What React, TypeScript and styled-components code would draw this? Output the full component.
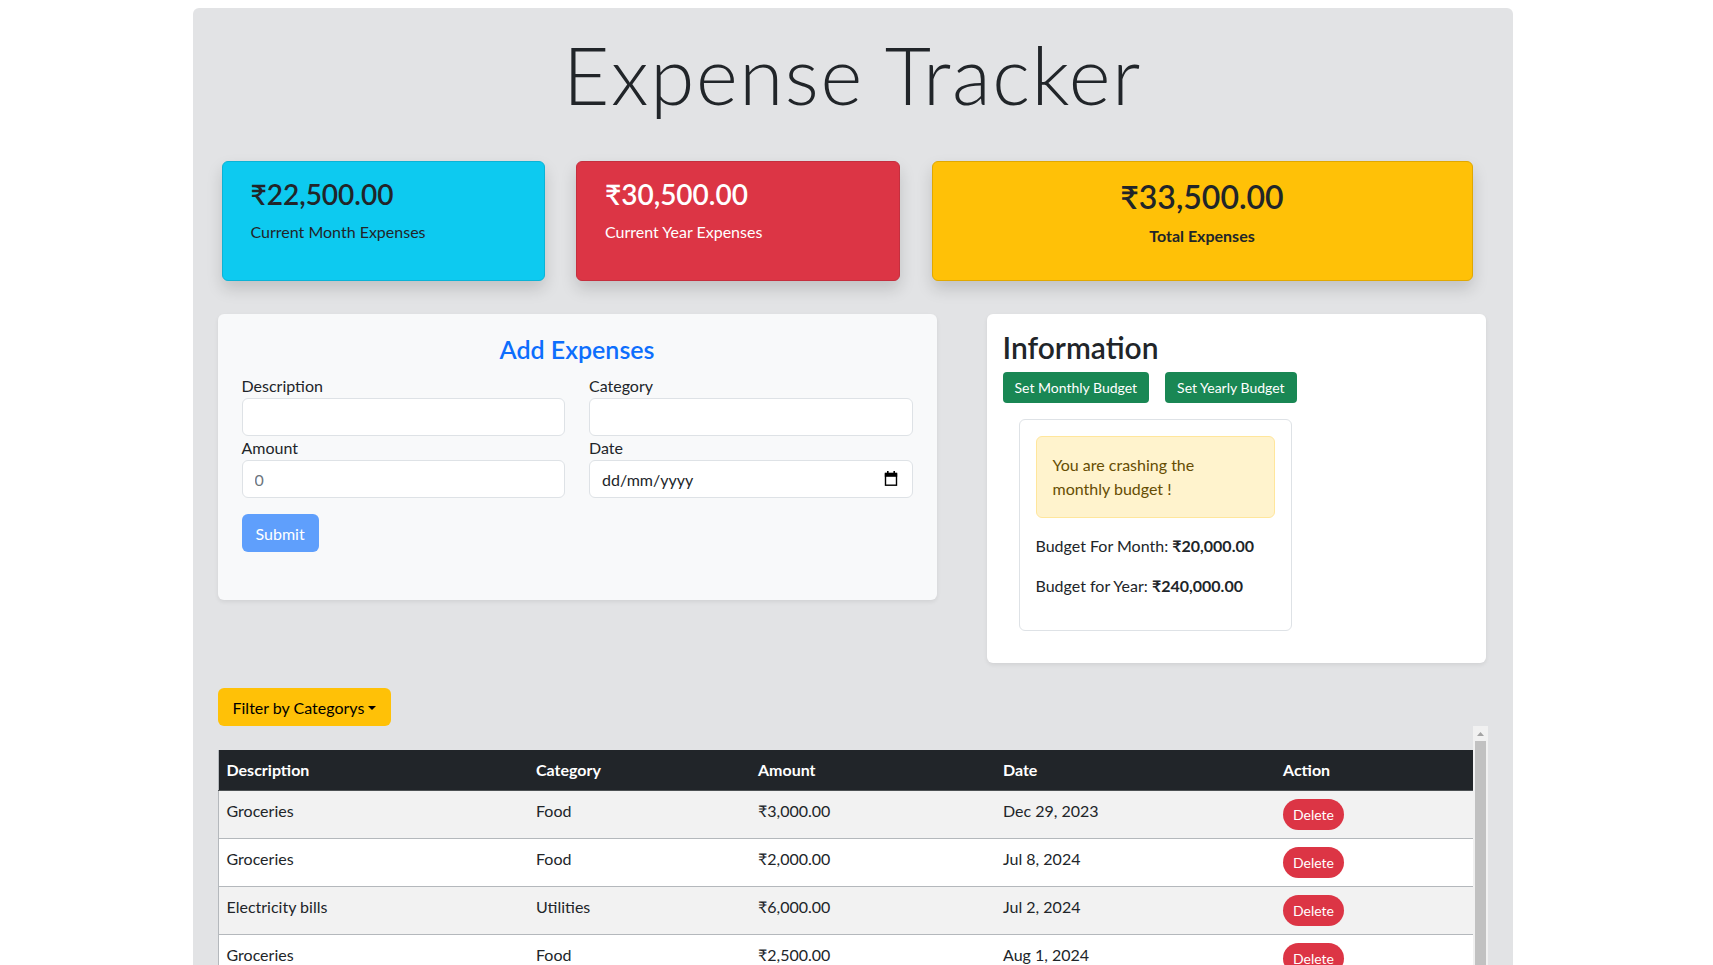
import React from "react";
import styled, { createGlobalStyle } from "styled-components";

const GlobalStyle = createGlobalStyle`
  * { box-sizing: border-box; }
  body {
    margin: 0;
    background: #fff;
    color: #212529;
    font-family: Lato, "Noto Sans", "DejaVu Sans", sans-serif;
    font-size: 16px;
    line-height: 1.5;
  }
`;

const expenses = [
  { description: "Groceries", category: "Food", amount: "₹3,000.00", date: "Dec 29, 2023" },
  { description: "Groceries", category: "Food", amount: "₹2,000.00", date: "Jul 8, 2024" },
  { description: "Electricity bills", category: "Utilities", amount: "₹6,000.00", date: "Jul 2, 2024" },
  { description: "Groceries", category: "Food", amount: "₹2,500.00", date: "Aug 1, 2024" },
  { description: "House Rent", category: "Housing", amount: "₹20,000.00", date: "Aug 5, 2024" },
];

const CalendarIcon = () => (
  <svg width="14" height="15" viewBox="0 0 14 15">
    <rect x="3" y="0" width="1.6" height="3" fill="#000" />
    <rect x="9.4" y="0" width="1.6" height="3" fill="#000" />
    <rect x="0.8" y="2.4" width="12.4" height="3.4" fill="#000" />
    <rect x="1.5" y="2.4" width="11" height="11.8" fill="none" stroke="#000" strokeWidth="1.4" />
  </svg>
);

export default function App() {
  return (
    <>
      <GlobalStyle />
      <Container>
        <Title>Expense Tracker</Title>

        <StatsRow>
          <StatCard $bg="#0dcaf0" $border="#0bb3d6" $fg="#212529">
            <StatAmount>₹22,500.00</StatAmount>
            <StatLabel>Current Month Expenses</StatLabel>
          </StatCard>
          <StatCard $bg="#dc3545" $border="#c52f3e" $fg="#fff">
            <StatAmount>₹30,500.00</StatAmount>
            <StatLabel>Current Year Expenses</StatLabel>
          </StatCard>
          <StatCard $bg="#ffc107" $border="#e0a800" $fg="#212529" $center>
            <StatAmount $size={32}>₹33,500.00</StatAmount>
            <StatLabel $bold>Total Expenses</StatLabel>
          </StatCard>
        </StatsRow>

        <PanelsRow>
          <FormPanel>
            <FormTitle>Add Expenses</FormTitle>
            <FieldGrid>
              <Field>
                <FieldLabel>Description</FieldLabel>
                <TextInput type="text" />
              </Field>
              <Field>
                <FieldLabel>Category</FieldLabel>
                <TextInput type="text" />
              </Field>
              <Field>
                <FieldLabel>Amount</FieldLabel>
                <TextInput type="text" placeholder="0" />
              </Field>
              <Field>
                <FieldLabel>Date</FieldLabel>
                <DateWrap>
                  <TextInput type="text" readOnly value="dd/mm/yyyy" />
                  <DateIcon>
                    <CalendarIcon />
                  </DateIcon>
                </DateWrap>
              </Field>
            </FieldGrid>
            <SubmitButton>Submit</SubmitButton>
          </FormPanel>

          <InfoPanel>
            <InfoTitle>Information</InfoTitle>
            <ButtonRow>
              <GreenButton>Set Monthly Budget</GreenButton>
              <GreenButton>Set Yearly Budget</GreenButton>
            </ButtonRow>
            <BudgetCard>
              <Alert>
                You are crashing the
                <br />
                monthly budget !
              </Alert>
              <BudgetLine>
                Budget For Month: <strong>₹20,000.00</strong>
              </BudgetLine>
              <BudgetLine>
                Budget for Year: <strong>₹240,000.00</strong>
              </BudgetLine>
            </BudgetCard>
          </InfoPanel>
        </PanelsRow>

        <FilterButton>Filter by Categorys</FilterButton>

        <TableFrame>
          <TableViewport>
            <Table>
              <colgroup>
                <col style={{ width: 310 }} />
                <col style={{ width: 222 }} />
                <col style={{ width: 245 }} />
                <col style={{ width: 280 }} />
                <col style={{ width: 198 }} />
              </colgroup>
              <thead>
                <tr>
                  <Th>Description</Th>
                  <Th>Category</Th>
                  <Th>Amount</Th>
                  <Th>Date</Th>
                  <Th>Action</Th>
                </tr>
              </thead>
              <tbody>
                {expenses.map((e, i) => (
                  <Row key={i}>
                    <Td>{e.description}</Td>
                    <Td>{e.category}</Td>
                    <Td>{e.amount}</Td>
                    <Td>{e.date}</Td>
                    <Td>
                      <DeleteButton>Delete</DeleteButton>
                    </Td>
                  </Row>
                ))}
              </tbody>
            </Table>
          </TableViewport>
          <ScrollTrack>
            <ScrollArrow>
              <svg width="7" height="4" viewBox="0 0 7 4">
                <path d="M0 4L3.5 0L7 4Z" fill="#a3a3a3" />
              </svg>
            </ScrollArrow>
            <ScrollThumb />
          </ScrollTrack>
        </TableFrame>
      </Container>
    </>
  );
}

const Container = styled.div`
  width: 1320px;
  margin: 8px 0 0 calc(50% - 664px);
  padding: 18px 25px 40px;
  background: #e2e3e5;
  border-radius: 6px;
`;

const Title = styled.h1`
  margin: 0 0 39px;
  text-align: center;
  font-size: 80px;
  font-weight: 300;
  letter-spacing: 1.6px;
  line-height: 1.2;
  color: #212529;
`;

const StatsRow = styled.div`
  display: grid;
  grid-template-columns: 323px 324px 541px;
  column-gap: 31.5px;
  padding-left: 4px;
  margin-bottom: 33px;
`;

const StatCard = styled.div<{ $bg: string; $border: string; $fg: string; $center?: boolean }>`
  height: 120px;
  padding: 16px ${(p) => (p.$center ? "16px" : "28px")};
  background: ${(p) => p.$bg};
  border: 1px solid ${(p) => p.$border};
  border-radius: 6px;
  color: ${(p) => p.$fg};
  text-align: ${(p) => (p.$center ? "center" : "left")};
  box-shadow: 0 8px 16px rgba(0, 0, 0, 0.15);
`;

const StatAmount = styled.h3<{ $size?: number }>`
  margin: 0 0 8px;
  font-size: ${(p) => p.$size ?? 28}px;
  font-weight: 600;
  line-height: 1.2;
`;

const StatLabel = styled.p<{ $bold?: boolean }>`
  margin: 0;
  font-weight: ${(p) => (p.$bold ? 700 : 400)};
`;

const PanelsRow = styled.div`
  display: flex;
  align-items: flex-start;
  gap: 50px;
  margin-bottom: 25px;
`;

const FormPanel = styled.div`
  width: 719px;
  padding: 20px 24px 48px;
  background: #f8f9fa;
  border-radius: 6px;
  box-shadow: 0 2px 4px rgba(0, 0, 0, 0.075);
`;

const FormTitle = styled.h3`
  margin: 0 0 9px;
  text-align: center;
  color: #0d6efd;
  font-size: 25px;
  font-weight: 600;
  line-height: 31px;
`;

const FieldGrid = styled.div`
  display: grid;
  grid-template-columns: 1fr 1fr;
  column-gap: 24px;
`;

const Field = styled.div`
  display: flex;
  flex-direction: column;
`;

const FieldLabel = styled.label`
  line-height: 24px;
`;

const TextInput = styled.input`
  width: 100%;
  height: 38px;
  padding: 6px 12px;
  border: 1px solid #dee2e6;
  border-radius: 6px;
  background: #fff;
  color: #212529;
  font-family: inherit;
  font-size: 16px;
  outline: none;
  &::placeholder {
    color: #6c757d;
  }
`;

const DateWrap = styled.div`
  position: relative;
`;

const DateIcon = styled.span`
  position: absolute;
  right: 15px;
  top: 11px;
  display: flex;
`;

const SubmitButton = styled.button`
  margin-top: 16px;
  height: 38px;
  padding: 6px 14px;
  border: none;
  border-radius: 6px;
  background: #5f9ffc;
  color: #fff;
  font-family: inherit;
  font-size: 16px;
`;

const InfoPanel = styled.div`
  width: 499px;
  padding: 16px;
  background: #fff;
  border-radius: 6px;
  box-shadow: 0 2px 4px rgba(0, 0, 0, 0.075);
`;

const InfoTitle = styled.h2`
  margin: 0 0 8px;
  font-size: 30px;
  font-weight: 600;
  line-height: 34px;
`;

const ButtonRow = styled.div`
  display: flex;
  gap: 16px;
`;

const GreenButton = styled.button`
  height: 31px;
  padding: 4px 12px;
  border: none;
  border-radius: 4px;
  background: #198754;
  color: #fff;
  font-family: inherit;
  font-size: 14px;
`;

const BudgetCard = styled.div`
  width: 273px;
  margin: 16px 0 16px 16px;
  padding: 16px;
  border: 1px solid #dee2e6;
  border-radius: 6px;
`;

const Alert = styled.div`
  margin-bottom: 16px;
  padding: 16px;
  background: #fff3cd;
  border: 1px solid #ffe69c;
  border-radius: 6px;
  color: #664d03;
`;

const BudgetLine = styled.p`
  margin: 0 0 16px;
  strong {
    font-weight: 700;
  }
`;

const FilterButton = styled.button`
  display: block;
  height: 38px;
  padding: 6px 15px;
  border: none;
  border-radius: 6px;
  background: #ffc107;
  color: #000;
  font-family: inherit;
  font-size: 16px;
  &::after {
    content: "";
    display: inline-block;
    margin-left: 4px;
    vertical-align: 4px;
    border-top: 4.8px solid;
    border-right: 4.8px solid transparent;
    border-left: 4.8px solid transparent;
  }
`;

const TableFrame = styled.div`
  display: flex;
  width: 1270px;
  height: 300px;
  overflow: hidden;
`;

const TableViewport = styled.div`
  width: 1255px;
  padding-top: 24px;
`;

const ScrollTrack = styled.div`
  display: flex;
  flex-direction: column;
  width: 15px;
  background: #f1f1f1;
`;

const ScrollArrow = styled.div`
  display: flex;
  align-items: center;
  justify-content: center;
  height: 15px;
`;

const ScrollThumb = styled.div`
  flex: 1;
  margin: 0 2px;
  background: #c1c1c1;
`;

const Table = styled.table`
  width: 100%;
  table-layout: fixed;
  border-collapse: collapse;
  border-left: 1px solid #b4b8bc;
  border-right: 1px solid #b4b8bc;
`;

const Th = styled.th`
  padding: 8px;
  background: #212529;
  color: #fff;
  text-align: left;
  font-weight: 700;
  border-bottom: 1px solid #4d5154;
`;

const Row = styled.tr`
  background: #fff;
  &:nth-child(odd) {
    background: #f2f2f2;
  }
`;

const Td = styled.td`
  padding: 8px;
  vertical-align: top;
  border-bottom: 1px solid #b4b8bc;
`;

const DeleteButton = styled.button`
  height: 31px;
  padding: 4px 10px;
  border: none;
  border-radius: 50rem;
  background: #dc3545;
  color: #fff;
  font-family: inherit;
  font-size: 14px;
`;
